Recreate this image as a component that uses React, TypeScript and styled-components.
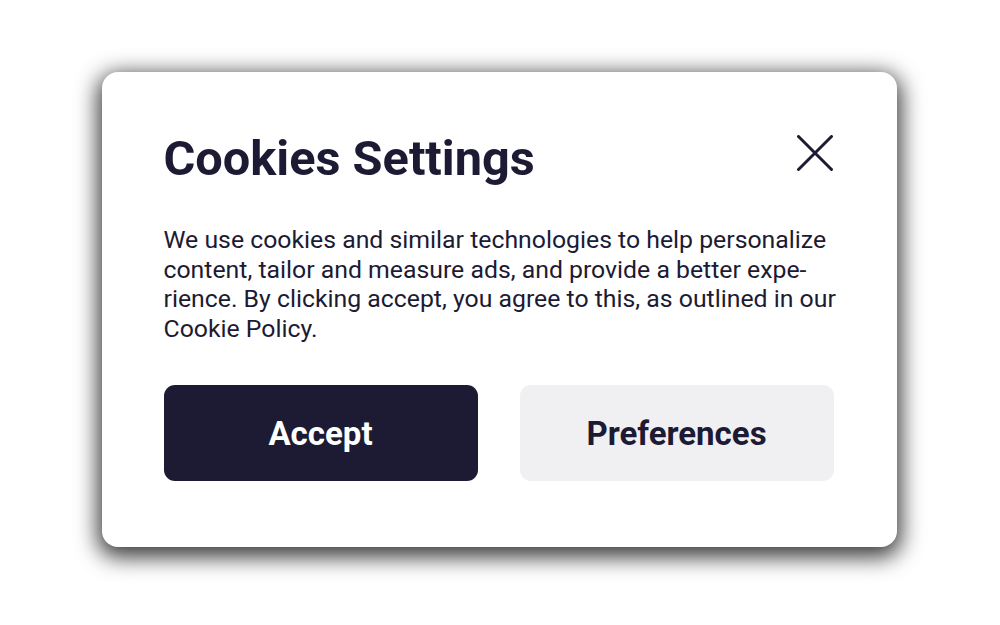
import React from 'react';
import styled, { createGlobalStyle } from 'styled-components';

const GlobalStyle = createGlobalStyle`
  html, body {
    margin: 0;
    padding: 0;
    background: #ffffff;
  }
  body {
    font-family: Roboto, "Liberation Sans", sans-serif;
  }
`;

const Page = styled.div`
  width: 1000px;
  height: 625px;
  display: flex;
  align-items: center;
  justify-content: center;
  padding: 0 2px 6px 0;
  box-sizing: border-box;
`;

const Card = styled.div`
  width: 795px;
  height: 475px;
  box-sizing: border-box;
  background: #ffffff;
  border-radius: 16px;
  box-shadow: 0 6px 22px 4px rgba(0, 0, 0, 0.78);
  padding: 55px 63px 66px 62px;
  display: flex;
  flex-direction: column;
  color: #1c1b33;
`;

const Header = styled.div`
  display: flex;
  align-items: flex-start;
  justify-content: space-between;
`;

const Title = styled.h1`
  margin: 0;
  font-size: 48.7px;
  font-weight: 700;
  letter-spacing: 0;
  line-height: 64px;
`;

const CloseButton = styled.button`
  width: 36px;
  height: 36px;
  padding: 0;
  margin: 8px 1px 0 0;
  border: none;
  background: none;
  display: flex;
  align-items: center;
  justify-content: center;
  cursor: pointer;
`;

const Text = styled.p`
  margin: 34px 0 0;
  font-size: 24.8px;
  line-height: 29.5px;
  font-weight: 400;
  white-space: nowrap;
`;

const Actions = styled.div`
  margin-top: auto;
  display: grid;
  grid-template-columns: 1fr 1fr;
  gap: 42px;
`;

const Button = styled.button<{ $primary?: boolean }>`
  height: 96px;
  border: none;
  border-radius: 11px;
  font-family: Roboto, "Liberation Sans", sans-serif;
  font-size: 33px;
  font-weight: 700;
  background: ${(p) => (p.$primary ? '#1c1b33' : '#f0f0f3')};
  color: ${(p) => (p.$primary ? '#ffffff' : '#1c1b33')};
  cursor: pointer;
`;

const CloseIcon = () => (
  <svg width="36" height="36" viewBox="0 0 36 36" fill="none">
    <path
      d="M1.5 1.5L34.5 34.5M34.5 1.5L1.5 34.5"
      stroke="#1c1b33"
      strokeWidth="3"
      strokeLinecap="round"
    />
  </svg>
);

const lines = [
  'We use cookies and similar technologies to help personalize',
  'content, tailor and measure ads, and provide a better expe-',
  'rience. By clicking accept, you agree to this, as outlined in our',
  'Cookie Policy.',
];

const App = () => {
  return (
    <>
      <GlobalStyle />
      <Page>
        <Card>
          <Header>
            <Title>Cookies Settings</Title>
            <CloseButton aria-label="Close">
              <CloseIcon />
            </CloseButton>
          </Header>
          <Text>
            {lines.map((line, i) => (
              <React.Fragment key={i}>
                {line}
                {i < lines.length - 1 && <br />}
              </React.Fragment>
            ))}
          </Text>
          <Actions>
            <Button $primary>Accept</Button>
            <Button>Preferences</Button>
          </Actions>
        </Card>
      </Page>
    </>
  );
};

export default App;
